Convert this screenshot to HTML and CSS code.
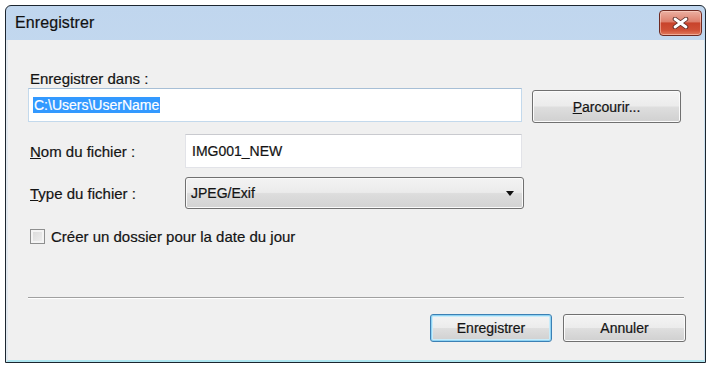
FILE: index.html
```html
<!DOCTYPE html>
<html lang="fr">
<head>
  <meta charset="UTF-8" />
  <title>Enregistrer</title>
  <link rel="stylesheet" href="styles.css">
</head>
<body>
  <div class="window">
    <!-- Title bar -->
    <div class="titlebar">
      <span class="title">Enregistrer</span>
      <div class="close-btn">
        <svg width="17" height="12" viewBox="0 0 17 12">
          <path d="M3 2 L14 10 M14 2 L3 10" stroke="#5a2a24" stroke-width="4.6" stroke-linecap="round" fill="none" />
          <path d="M3 2 L14 10 M14 2 L3 10" stroke="#ffffff" stroke-width="2.8" stroke-linecap="round" fill="none" />
        </svg>
      </div>
    </div>

    <!-- Dialog body -->
    <div class="client">
      <div class="field-label">Enregistrer dans :</div>
      <div class="row-path">
        <div class="textbox path-box"><span class="selected">C:\Users\UserName</span></div>
        <div class="btn browse-btn"><u>P</u>arcourir...</div>
      </div>

      <div class="row row-name">
        <div class="row-label"><u>N</u>om du fichier :</div>
        <div class="textbox name-box">IMG001_NEW</div>
      </div>

      <div class="row row-type">
        <div class="row-label"><u>T</u>ype du fichier :</div>
        <div class="combo">
          <span>JPEG/Exif</span>
          <span class="combo-arrow"></span>
        </div>
      </div>

      <div class="check-row">
        <span class="checkbox"></span>
        <span>Créer un dossier pour la date du jour</span>
      </div>

      <div class="separator"></div>

      <div class="actions">
        <div class="btn action-btn default">Enregistrer</div>
        <div class="btn action-btn">Annuler</div>
      </div>
    </div>
  </div>
</body>
</html>
```

FILE: styles.css
```css
* {
  margin: 0;
  padding: 0;
  box-sizing: border-box;
}

body {
  background: #ffffff;
  font-family: "Liberation Sans", Arial, sans-serif;
  color: #141414;
  padding: 5px 0 0 5px;
  -webkit-text-stroke: 0.2px #141414;
}

.window {
  width: 701px;
  height: 358px;
  border: 1px solid #1c2630;
  border-radius: 6px 6px 0 0;
  background: linear-gradient(180deg, #c0d6ee 0%, #d3e3f4 100%);
  display: flex;
  flex-direction: column;
  overflow: hidden;
}

.titlebar {
  height: 34px;
  display: flex;
  justify-content: space-between;
  align-items: flex-start;
  padding: 0 3px 0 9px;
  flex-shrink: 0;
}

.title {
  font-size: 16px;
  line-height: 34px;
  color: #111111;
  letter-spacing: 0.1px;
}

.close-btn {
  margin-top: 4px;
  width: 43px;
  height: 26px;
  border: 1px solid #6e2a22;
  border-radius: 4px;
  background: linear-gradient(180deg, #ebb0a2 0%, #dd7f6c 45%, #c8432b 50%, #cf5036 80%, #e27b5e 100%);
  box-shadow: inset 0 0 0 1px rgba(255, 220, 210, 0.5);
  display: flex;
  justify-content: center;
  align-items: center;
}

.client {
  flex: 1;
  background: #f0f0f0;
  border-left: 2px solid #e2e8ee;
  border-right: 1px solid #cfe3f0;
  border-bottom: 2px solid #aee6f0;
  padding: 30px 18px 0 20px;
  font-size: 15px;
}

.field-label {
  padding-left: 2px;
  line-height: 17px;
  height: 17px;
  margin-bottom: 1px;
}

.row-path {
  display: flex;
  align-items: flex-start;
  gap: 10px;
}

.textbox {
  background: #ffffff;
  height: 34px;
  display: flex;
  align-items: center;
  font-size: 14px;
}

.path-box {
  width: 494px;
  border: 1px solid #c3d9ec;
  border-top-color: #a7bfd6;
  padding-left: 4px;
}

.selected {
  background: #3399ff;
  color: #ffffff;
  -webkit-text-stroke: 0.2px #ffffff;
  padding: 0 1px;
  line-height: 16px;
}

.btn {
  border: 1px solid #707070;
  border-radius: 3px;
  background: linear-gradient(180deg, #f4f4f4 0%, #ececec 48%, #dedede 52%, #d0d0d0 100%);
  box-shadow: inset 0 0 0 1px #fbfbfb;
  display: flex;
  justify-content: center;
  align-items: center;
  font-size: 14px;
}

.browse-btn {
  margin-top: 2px;
  width: 149px;
  height: 33px;
}

.row {
  display: flex;
  align-items: center;
}

.row-label {
  width: 157px;
  padding-left: 2px;
}

.row-name {
  margin-top: 11px;
}

.name-box {
  width: 337px;
  border: 1px solid #e2e3e8;
  border-top-color: #c9cacf;
  padding-left: 6px;
}

.row-type {
  margin-top: 9px;
}

.combo {
  width: 339px;
  height: 32px;
  border: 1px solid #707070;
  border-radius: 3px;
  background: linear-gradient(180deg, #f3f3f3 0%, #ebebeb 48%, #dddddd 52%, #d2d2d2 100%);
  box-shadow: inset 0 0 0 1px #fafafa;
  display: flex;
  justify-content: space-between;
  align-items: center;
  padding: 0 9px 0 5px;
  font-size: 14px;
}

.combo-arrow {
  width: 0;
  height: 0;
  border-left: 4px solid transparent;
  border-right: 4px solid transparent;
  border-top: 5px solid #111111;
}

.check-row {
  margin-top: 19px;
  padding-left: 2px;
  display: flex;
  align-items: center;
  gap: 6px;
  height: 16px;
}

.checkbox {
  width: 15px;
  height: 15px;
  border: 1px solid #8e8f8f;
  background: linear-gradient(135deg, #d8d8d8 0%, #f1f1f1 100%);
  box-shadow: inset 0 0 0 2px #f4f4f4;
}

.separator {
  margin: 53px 2px 0 0;
  border-top: 1px solid #a0a0a0;
  border-bottom: 1px solid #ffffff;
}

.actions {
  margin-top: 15px;
  display: flex;
  justify-content: flex-end;
  gap: 11px;
}

.action-btn {
  width: 123px;
  height: 28px;
}

.action-btn.default {
  width: 122px;
  border-color: #3c80b4;
  box-shadow: inset 0 0 0 1px #8fd3f3, inset 0 0 0 2px #c9ecfa;
}
```
